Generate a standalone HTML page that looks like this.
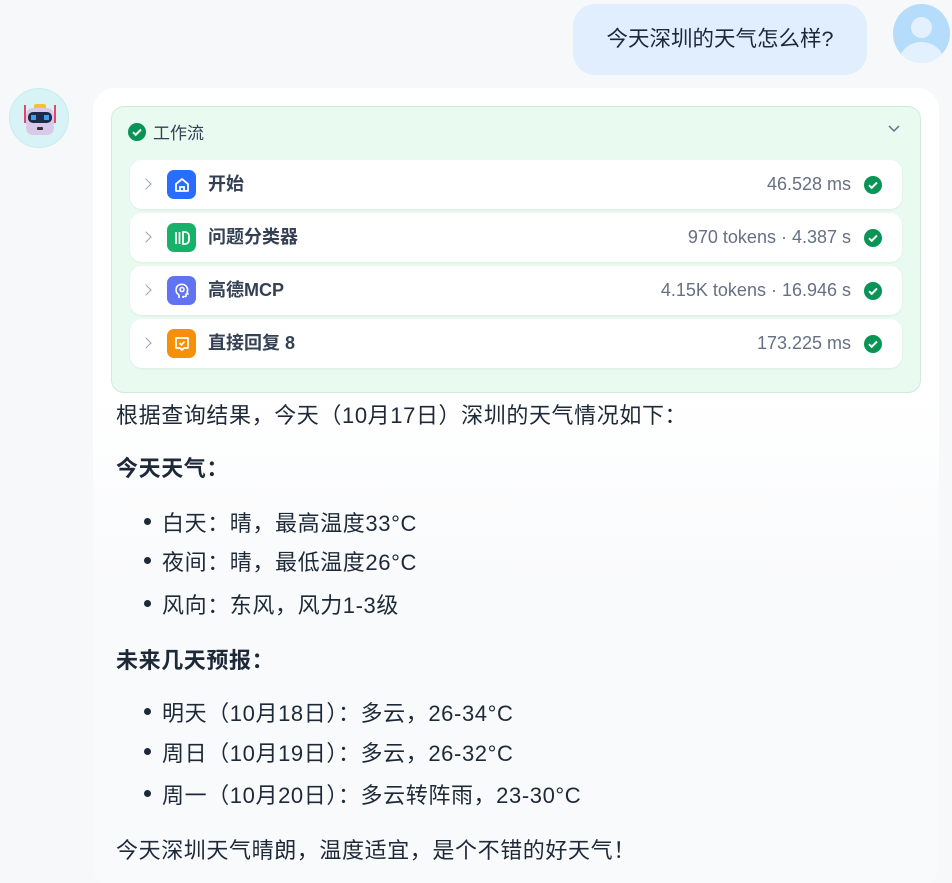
<!DOCTYPE html>
<html><head><meta charset="utf-8"><style>
*{box-sizing:border-box;margin:0;padding:0}
html,body{width:952px;height:883px;overflow:hidden}
body{background:#f7f8fa;font-family:"Liberation Sans","Noto Sans CJK SC",sans-serif;color:#1d2939;position:relative}
.ub{position:absolute;left:573px;top:4px;width:294px;height:71px;background:#e0eefe;border-radius:22px;font-size:21.5px;line-height:71px;text-align:center;color:#1d2939;white-space:nowrap}
.ua{position:absolute;left:893px;top:4px;width:57px;height:59px;border-radius:50%;background:#b5dcfb;overflow:hidden}
.ba{position:absolute;left:9px;top:88px;width:60px;height:60px;border-radius:50%;background:#d7f3f6;border:1px solid #c9ecef}
.card{position:absolute;left:93px;top:88px;width:846px;height:800px;background:linear-gradient(#fff 0,#fff 300px,#f9fafc 500px);border-radius:22px}
.wf{position:absolute;left:111px;top:106px;width:810px;height:287px;background:#e9fbf1;border:1px solid #d0eadb;border-radius:13px}
.wh{position:absolute;left:16px;top:12px;font-size:17px;color:#344054;display:flex;align-items:center;gap:7px}
.it{position:absolute;left:18px;width:772px;height:49px;background:#fff;border-radius:12px;box-shadow:0 1px 2px rgba(0,0,0,.06)}
.it .ch{position:absolute;left:12px;top:20px;width:8px;height:8px;border-right:1.5px solid #98a2b3;border-top:1.5px solid #98a2b3;transform:rotate(45deg)}
.it .ic{position:absolute;left:37px;top:10px;width:29px;height:29px;border-radius:7px;display:flex;align-items:center;justify-content:center}
.it .nm{position:absolute;left:78px;top:0;line-height:49px;font-size:18px;font-weight:bold;color:#344054;white-space:nowrap}
.it .tm{position:absolute;right:51px;top:0;line-height:49px;font-size:18px;color:#667085;white-space:nowrap}
.it .ok{position:absolute;right:20px;top:16px}
.txt{position:absolute;left:116px;font-size:22px;color:#1d2939;white-space:nowrap;letter-spacing:.6px}
.b{font-weight:bold}
.li{position:absolute;left:162px;font-size:22px;color:#1d2939;white-space:nowrap;letter-spacing:.6px}
.li:before{content:"";position:absolute;left:-18px;top:12px;width:7px;height:7px;border-radius:50%;background:#1d2939}
</style></head><body>
<div class="ub">今天深圳的天气怎么样?</div>
<div class="ua"><div style="position:absolute;left:18px;top:13px;width:21px;height:21px;border-radius:50%;background:#e3f1fe"></div><div style="position:absolute;left:6px;top:38px;width:45px;height:40px;border-radius:50%;background:#e3f1fe"></div></div>
<div class="ba"><svg width="60" height="60" viewBox="0 0 60 60"><rect x="24" y="15" width="12" height="5" rx="2" fill="#f2c230"/><line x1="15" y1="16" x2="15" y2="34" stroke="#e8436a" stroke-width="2"/><line x1="45" y1="16" x2="45" y2="34" stroke="#e8436a" stroke-width="2"/><rect x="16" y="19" width="28" height="27" rx="7" fill="#d9c9e8"/><rect x="18" y="23" width="24" height="11" rx="5" fill="#1e2a4a"/><rect x="21" y="26" width="5" height="5" fill="#3aa0f0"/><rect x="34" y="26" width="5" height="5" fill="#3aa0f0"/><rect x="27" y="38" width="6" height="3" rx="1" fill="#333"/></svg></div>
<div class="card"></div>
<div class="wf">
<div class="wh"><svg width="18" height="18" viewBox="0 0 18 18"><circle cx="9" cy="9" r="9" fill="#079455"/><path d="M5 9.2l2.7 2.6L13 6.5" stroke="#fff" stroke-width="2" fill="none"/></svg>工作流</div>
<svg style="position:absolute;right:20px;top:18px" width="12" height="8" viewBox="0 0 12 8"><path d="M1 1l5 5 5-5" stroke="#667085" stroke-width="1.5" fill="none"/></svg>
<div class="it" style="top:53px"><div class="ch"></div><div class="ic" style="background:#296dff"><svg width="18" height="18" viewBox="0 0 18 18"><path d="M3 8L9 3l6 5v7H3z" stroke="#fff" stroke-width="1.8" fill="none" stroke-linejoin="round"/><path d="M7 15v-4h4v4" stroke="#fff" stroke-width="1.8" fill="none"/></svg></div><div class="nm">开始</div><div class="tm">46.528 ms</div><svg class="ok" width="18" height="18" viewBox="0 0 18 18"><circle cx="9" cy="9" r="9" fill="#079455"/><path d="M5 9.2l2.7 2.6L13 6.5" stroke="#fff" stroke-width="2" fill="none"/></svg></div>
<div class="it" style="top:106px"><div class="ch"></div><div class="ic" style="background:#17b26a"><svg width="18" height="18" viewBox="0 0 18 18"><path d="M3 3v12M6.5 3v12M10 3h2a4 4 0 0 1 4 4v4a4 4 0 0 1-4 4h-2z" stroke="#fff" stroke-width="1.8" fill="none"/></svg></div><div class="nm">问题分类器</div><div class="tm">970 tokens · 4.387 s</div><svg class="ok" width="18" height="18" viewBox="0 0 18 18"><circle cx="9" cy="9" r="9" fill="#079455"/><path d="M5 9.2l2.7 2.6L13 6.5" stroke="#fff" stroke-width="2" fill="none"/></svg></div>
<div class="it" style="top:159px"><div class="ch"></div><div class="ic" style="background:#6172f3"><svg width="18" height="18" viewBox="0 0 18 18"><path d="M6 16v-3C3 11 2.5 8 3.5 5.5 5 2 10 1.5 12.5 3.5 15 5.5 15 9 14 10l1 2h-2v2.5h-3V16" stroke="#fff" stroke-width="1.6" fill="none" stroke-linejoin="round"/><circle cx="9" cy="7.5" r="2" stroke="#fff" stroke-width="1.5" fill="none"/></svg></div><div class="nm">高德MCP</div><div class="tm">4.15K tokens · 16.946 s</div><svg class="ok" width="18" height="18" viewBox="0 0 18 18"><circle cx="9" cy="9" r="9" fill="#079455"/><path d="M5 9.2l2.7 2.6L13 6.5" stroke="#fff" stroke-width="2" fill="none"/></svg></div>
<div class="it" style="top:212px"><div class="ch"></div><div class="ic" style="background:#f79009"><svg width="18" height="18" viewBox="0 0 18 18"><path d="M3 3h12v10h-4l-2 2-2-2H3z" stroke="#fff" stroke-width="1.7" fill="none" stroke-linejoin="round"/><path d="M6.5 8l2 2 3-3.5" stroke="#fff" stroke-width="1.6" fill="none"/></svg></div><div class="nm">直接回复 8</div><div class="tm">173.225 ms</div><svg class="ok" width="18" height="18" viewBox="0 0 18 18"><circle cx="9" cy="9" r="9" fill="#079455"/><path d="M5 9.2l2.7 2.6L13 6.5" stroke="#fff" stroke-width="2" fill="none"/></svg></div>
</div>
<div class="txt" style="top:398px">根据查询结果，今天（10月17日）深圳的天气情况如下：</div>
<div class="txt b" style="top:451px">今天天气：</div>
<div class="li" style="top:506px">白天：晴，最高温度33°C</div>
<div class="li" style="top:545px">夜间：晴，最低温度26°C</div>
<div class="li" style="top:588px">风向：东风，风力1-3级</div>
<div class="txt b" style="top:643px">未来几天预报：</div>
<div class="li" style="top:696px">明天（10月18日）：多云，26-34°C</div>
<div class="li" style="top:736px">周日（10月19日）：多云，26-32°C</div>
<div class="li" style="top:778px">周一（10月20日）：多云转阵雨，23-30°C</div>
<div class="txt" style="top:833px">今天深圳天气晴朗，温度适宜，是个不错的好天气！</div>
</body></html>
